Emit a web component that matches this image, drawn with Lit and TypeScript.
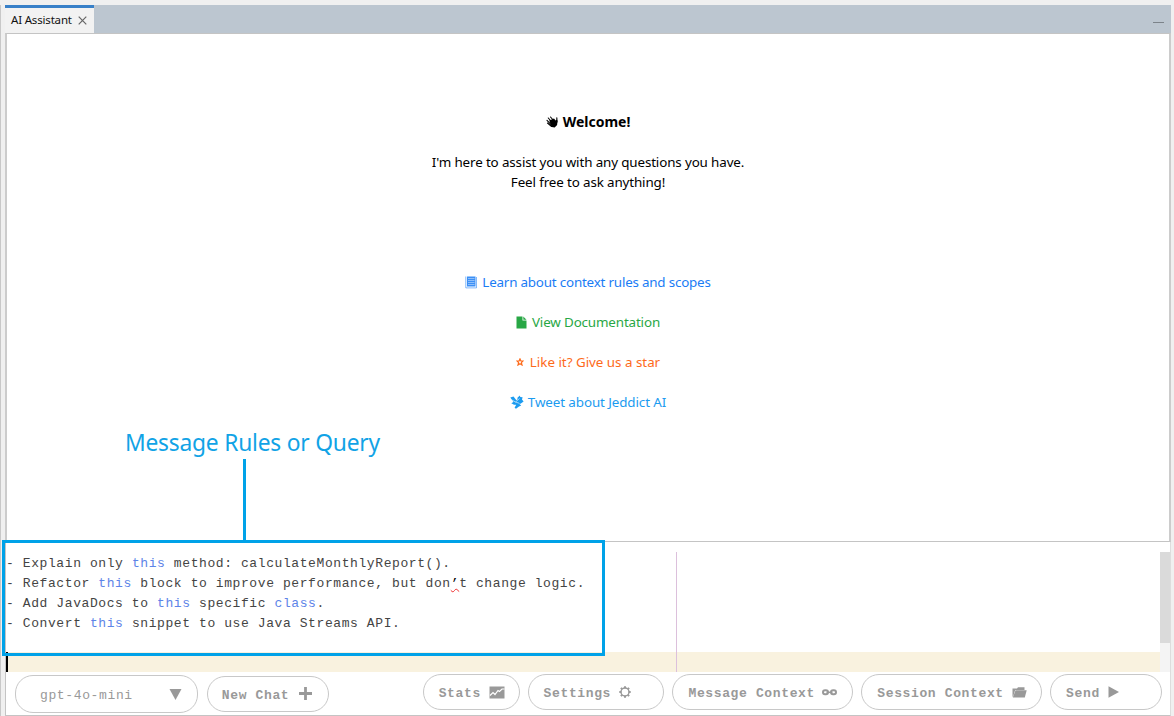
import { LitElement, html, css, svg } from "lit";
import { customElement, property } from "lit/decorators.js";

const ICONS: Record<string, { w: number; h: number; body: unknown }> = {
  wave: { w: 12, h: 12, body: svg`<path fill="currentColor" d="M3.200 4.400 8 2.500l1.600 2 1-1 .9 1.200-.4 4.300L8.600 11.500 5.700 11Z"/><path fill="none" stroke="currentColor" stroke-width="1.100" stroke-linecap="round" d="M4.500 1 8.500 5.500M2.300 2 6.500 7M1 4.300 5.500 8.800M1.500 7 5.600 10.500M10.800 1.800 11 6"/>` },
  book: { w: 12, h: 13, body: svg`<path fill="currentColor" opacity=".85" d="M2 .500h8.500v10H2z"/><path fill="none" stroke="currentColor" stroke-width=".9" opacity=".6" d="M.8.500v11.400H11.500V1"/><path fill="none" stroke="#fff" stroke-width=".6" opacity=".7" d="M3 2.500h6.500M3 4.500h6.500M3 6.500h6.500M3 8.500h6.500"/>` },
  doc: { w: 11, h: 13, body: svg`<path fill="currentColor" d="M.500.500h6v4h4v8h-10z"/><path fill="currentColor" d="M7.300.500l3.200 3.200H7.300z"/>` },
  star: { w: 8, h: 8, body: svg`<path fill="none" stroke="currentColor" stroke-width="1.200" d="M4 .9 4.900 3H7L5.400 4.600 6 7 4 5.700 2 7l.6-2.400L1 3h2.100Z"/>` },
  bird: { w: 14, h: 14, body: svg`<path fill="currentColor" d="M.300 2.500 3.500 1.600 6 4.800 7.200 5.200 7.600 2.500 10 .400 10.200 2 12.600 2.300 12 4.500 13.600 6.500 10.500 8.700 8.800 8.500 11.200 10.500 9 11.500 6 13.700 4.600 12.700 6.200 9.700 4 9.700 1.300 8.300 3.400 6.900Z"/><path fill="none" stroke="#fff" stroke-width=".6" d="M1.500 4.800 5.500 7 9.500 3.500M5.500 7 9 8.200"/>` },
  down: { w: 13, h: 11, body: svg`<path fill="currentColor" d="M.500 0h12L6.500 11z"/>` },
  plus: { w: 13, h: 13, body: svg`<path stroke="currentColor" stroke-width="2.800" d="M6.500 0v13M0 6.500h13"/>` },
  chart: { w: 16, h: 13, body: svg`<path fill="currentColor" d="M.500.500h15v12H.500z"/><path fill="none" stroke="#fff" stroke-width="1.200" d="M1 9.500 4 6.500 6 8.500 9 4.500l1.500 1L13 3h2.500"/>` },
  gear: { w: 12, h: 12, body: svg`<circle cx="6" cy="6" r="4" fill="none" stroke="currentColor" stroke-width="1.400"/><path stroke="currentColor" stroke-width="2" d="M6 .300v2M6 9.700v2M.300 6h2M9.700 6h2M1.900 1.900l1.400 1.400M8.700 8.700l1.400 1.400M1.900 10.100l1.400-1.400M8.700 3.300l1.400-1.400"/>` },
  link: { w: 15, h: 7, body: svg`<rect x="1" y="1.300" width="5" height="4" rx="2" fill="none" stroke="currentColor" stroke-width="2"/><rect x="9" y="1.300" width="5" height="4" rx="2" fill="none" stroke="currentColor" stroke-width="2"/><path stroke="currentColor" stroke-width="1.500" d="M4.500 3.300h6"/>` },
  folder: { w: 15, h: 11, body: svg`<path fill="currentColor" d="M.500 10V1.500h4.500L6 .300h6.500V3H3.200L1.300 9z"/><path fill="currentColor" d="M3.500 3.300h11.200L12.800 10.500H.8z"/>` },
  play: { w: 11, h: 12, body: svg`<path fill="currentColor" d="M.500.300v11.400L11 6z"/>` },
  close: { w: 9, h: 9, body: svg`<path stroke="currentColor" stroke-width="1.200" d="m.7.700 7.600 7.600M8.300.700.700 8.300"/>` },
};

const icon = (name: string) => {
  const i = ICONS[name];
  return html`<svg width=${i.w} height=${i.h} viewBox="0 0 ${i.w} ${i.h}">${i.body}</svg>`;
};

@customElement("pill-button")
class PillButton extends LitElement {
  @property() label = "";
  @property() icon = "";
  static styles = css`
    :host { display: block; box-sizing: border-box; }
    button {
      display: flex; align-items: center; width: 100%; height: 100%;
      box-sizing: border-box; margin: 0; padding: 2px 0 0 var(--inset, 15px); gap: var(--gap, 8px);
      background: #fff; border: 1.5px solid #c8c8c8; border-radius: 18px; color: #999;
      font: 13px/16px "Liberation Mono", monospace; letter-spacing: .63px; white-space: pre;
      font-weight: var(--weight, 700);
    }
    span { padding-top: 2px; }
    svg { display: block; flex: none; margin-bottom: var(--lift, 2px); }
  `;
  render() {
    return html`<button><span>${this.label}</span>${icon(this.icon)}</button>`;
  }
}

@customElement("app-root")
class AppRoot extends LitElement {
  static styles = css`
    :host {
      display: block; position: relative; box-sizing: border-box; width: 1174px; height: 716px;
      padding: 5px 3px 0 5px; overflow: hidden; background: #f0f0f0;
      font-family: "Noto Sans", sans-serif; color: #000;
    }
    .rail { position: absolute; left: 0; top: 5px; bottom: 0; width: 1px; background: #c8c8c8; }
    .window { display: flex; flex-direction: column; height: 711px; width: 1166px; }
    .tabs { display: flex; justify-content: space-between; height: 28px; background: #bcc6d0; flex: none; }
    .tab {
      display: flex; align-items: center; gap: 6px; box-sizing: border-box; width: 89px; height: 28px;
      padding: 0 0 3px 6px; border-top: 3px solid #3880c8; background: #f2f2f2;
      font-size: 11.5px; letter-spacing: -.18px; white-space: nowrap; color: #111;
    }
    .tab svg { color: #666; margin-top: 2px; }
    .min { width: 11px; height: 1px; margin: 17px 7px 0 0; background: #7c838a; }
    .chat {
      flex: none; height: 509px; box-sizing: border-box; background: #fff; text-align: center;
      border: 1px solid #c4c4c4; border-left: 2px solid #ccc; border-right: 2px solid #ccc; padding-top: 78px;
      font-size: 13.4px; line-height: 20px; letter-spacing: -.13px;
    }
    .chat p { margin: 0; display: flex; justify-content: center; align-items: center; gap: 5px; white-space: nowrap; }
    .chat .title { font-weight: 700; margin-bottom: 20px; font-size: 14px; letter-spacing: 0; }
    .links { display: flex; flex-direction: column; gap: 20px; padding-top: 80px; }
    .blue { color: #1a7cf5; letter-spacing: -.2px; }
    .green { color: #28a745; letter-spacing: -.15px; }
    .orange { color: #fd6a1a; letter-spacing: -.02px; }
    .sky { color: #1b9bf0; letter-spacing: -.1px; }
    .chat .orange { gap: 6px; }
    .chat .sky { gap: 4px; }
    .lower { flex: 1; display: flex; flex-direction: column; background: #fff; border-left: 1px solid #c4c4c4; border-right: 1px solid #ddd; border-bottom: 1px solid #c4c4c4; }
    .editor { display: flex; height: 130px; flex: none; }
    .code {
      position: relative; flex: 1; padding-top: 12px;
      font: 13px/20px "Liberation Mono", monospace; letter-spacing: .59px; color: #444; white-space: pre;
    }
    .code div { height: 20px; }
    .code b { font-weight: 400; color: #5d84e8; }
    .code i { font-style: normal; color: #000; text-decoration: underline wavy #f03030 1px; text-underline-offset: 1px; }
    .code .caret { margin-top: 18px; background: #f9f2df; border-left: 2px solid #000; }
    .margin { position: absolute; left: 670px; top: 10px; bottom: 0; width: 1px; background: #dcc0dc; }
    .scroll { width: 10px; margin-top: 10px; background: #f4f4f4; }
    .thumb { height: 91px; background: #dadada; }
    .bar { display: flex; align-items: flex-start; padding: 2px 8px 0 9px; }
    .bar pill-button { height: 36px; }
    .callout { position: absolute; left: 2px; top: 540px; width: 603px; height: 116px; box-sizing: border-box; border: 3px solid #00a2e8; }
    .stem { position: absolute; left: 243px; top: 459px; width: 3px; height: 83px; background: #00a2e8; }
    .note { position: absolute; left: 125px; top: 427px; font-size: 22.8px; line-height: 32px; letter-spacing: -.22px; color: #11a3e6; white-space: nowrap; }
    .bar .model { width: 183px; height: 38px; --inset: 24px; --gap: 36px; --weight: 400; margin-top: 1px; }
    .new { width: 122px; margin: 2px 94px 0 9px; --gap: 10px; --inset: 14px; --lift: 4px; }
    .stats { width: 97px; }
    .settings { width: 137px; margin-left: 8px; }
    .message { width: 181px; margin-left: 8px; --gap: 7px; }
    .session { width: 181px; margin-left: 8px; }
    .send { width: 112px; margin-left: 8px; }
  `;
  render() {
    return html`
      <div class="rail"></div>
      <div class="window">
        <div class="tabs"><div class="tab"><span>AI Assistant</span>${icon("close")}</div><div class="min"></div></div>
        <div class="chat">
          <p class="title">${icon("wave")}<span>Welcome!</span></p>
          <p>I'm here to assist you with any questions you have.</p>
          <p>Feel free to ask anything!</p>
          <div class="links">
            <p class="blue">${icon("book")}<span>Learn about context rules and scopes</span></p>
            <p class="green">${icon("doc")}<span>View Documentation</span></p>
            <p class="orange">${icon("star")}<span>Like it? Give us a star</span></p>
            <p class="sky">${icon("bird")}<span>Tweet about Jeddict AI</span></p>
          </div>
        </div>
        <div class="lower">
          <div class="editor">
            <div class="code"><div>- Explain only <b>this</b> method: calculateMonthlyReport().</div><div>- Refactor <b>this</b> block to improve performance, but don<i>’</i>t change logic.</div><div>- Add JavaDocs to <b>this</b> specific <b>class</b>.</div><div>- Convert <b>this</b> snippet to use Java Streams API.</div><div class="caret"></div><span class="margin"></span></div>
            <div class="scroll"><div class="thumb"></div></div>
          </div>
          <div class="bar">
            <pill-button class="model" label="gpt-4o-mini" icon="down"></pill-button>
            <pill-button class="new" label="New Chat" icon="plus"></pill-button>
            <pill-button class="stats" label="Stats" icon="chart"></pill-button>
            <pill-button class="settings" label="Settings" icon="gear"></pill-button>
            <pill-button class="message" label="Message Context" icon="link"></pill-button>
            <pill-button class="session" label="Session Context" icon="folder"></pill-button>
            <pill-button class="send" label="Send" icon="play"></pill-button>
          </div>
        </div>
      </div>
      <div class="stem"></div>
      <div class="callout"></div>
      <div class="note">Message Rules or Query</div>
    `;
  }
}
